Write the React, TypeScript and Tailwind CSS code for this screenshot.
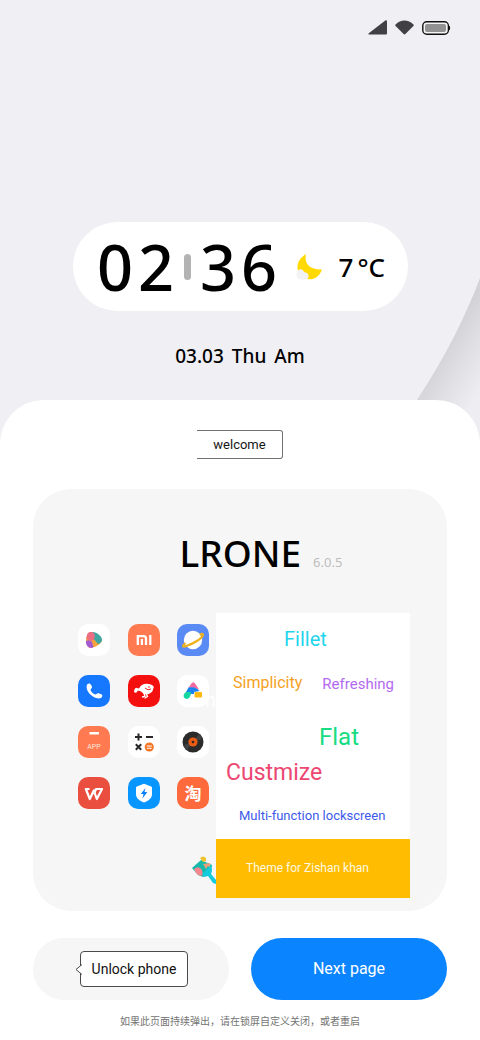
import type { ReactNode } from "react";

const rounded = "font-['Noto_Sans','Noto_Sans_CJK_SC',sans-serif]";

function StatusBar() {
  return (
    <div className="flex items-center justify-end gap-2 pr-[29px] pt-5" aria-label="Status">
      <svg width="19" height="15" viewBox="0 0 19 15" fill="#414145">
        <path d="M17.3.4Q19 0 19 1.5V13.5Q19 14.5 18 14.5H1Q-.3 14.2.8 13.2Z" />
      </svg>
      <svg width="19" height="15" viewBox="0 0 19 15" fill="#414145">
        <path d="M.6 4.4C5.500-.8 13.500-.8 18.400 4.400Q19.200 5.200 18.400 6L10.400 14.100Q9.500 15 8.600 14.100L.6 6Q-.2 5.200.6 4.400Z" />
      </svg>
      <svg width="29" height="14" viewBox="0 0 29 14">
        <rect x=".8" y=".8" width="25.600" height="12.400" rx="4" fill="#f5f5f7" stroke="#111" strokeWidth="1.400" />
        <rect x="3" y="3" width="21" height="8" rx="2" fill="#929292" />
        <path d="M27 5Q28.500 7 27 9Z" fill="#111" stroke="#111" />
      </svg>
    </div>
  );
}

function Backdrop() {
  return (
    <svg className="absolute right-0 top-[270px]" width="80" height="190" viewBox="0 0 80 190" aria-hidden="true">
      <defs>
        <linearGradient id="fold" gradientUnits="userSpaceOnUse" x1="45" y1="75" x2="91" y2="103">
          <stop offset="0" stopColor="#d2d2d7" />
          <stop offset=".45" stopColor="#dfdfe4" />
          <stop offset="1" stopColor="#ededf2" />
        </linearGradient>
      </defs>
      <path d="M80 8C66 46 43 91 17 130L-4 160V190H80Z" fill="url(#fold)" />
    </svg>
  );
}

function Digit({ children }: { children: ReactNode }) {
  return <span className="w-[41px] text-center">{children}</span>;
}

function Clock() {
  return (
    <section className="mx-auto mt-[187px] flex h-[89px] w-[335px] items-center rounded-full bg-white pl-[22px]" aria-label="Time and weather">
      <div className={`flex items-center text-[63px] font-medium leading-[88px] text-black ${rounded}`}>
        <Digit>0</Digit>
        <Digit>2</Digit>
        <span className="mx-[7px] h-[26px] w-[7px] rounded-full bg-[#b3b3b3]" />
        <Digit>3</Digit>
        <Digit>6</Digit>
      </div>
      <svg className="ml-4 shrink-0" width="27" height="28" viewBox="0 0 27 28">
        <path d="M10 1C8 9 12 17 26 16.500C23 25 15 28.500 8 25C0 21-2 8 10 1Z" fill="#ffd900" />
        <path d="M4 26.500C-.5 25.500-.6 17.500 3.500 16.500C6 15.500 7.500 17.500 8 19C11 19.500 13 21 12.500 24Q12 26.500 9.500 26.500Z" fill="#f2f2f2" />
      </svg>
      <div className={`ml-4 flex items-center gap-1 text-[26px] font-medium leading-8 text-black ${rounded}`}>
        <span>7</span>
        <span>°C</span>
      </div>
    </section>
  );
}

function Tile({ label, color, children }: { label: string; color: string; children: ReactNode }) {
  return (
    <li className={`h-8 w-8 overflow-hidden rounded-[10px] ${color}`}>
      <svg role="img" aria-label={label} width="32" height="32" viewBox="0 0 32 32">
        {children}
      </svg>
    </li>
  );
}

function IconGrid() {
  return (
    <ul className="grid grid-cols-[32px_32px_32px] justify-between gap-y-[19px]">
      <Tile label="Gallery" color="bg-white">
        <path d="M11 9C14 6.500 23 11 24 16C24 20 15 25 11 23.500C7 21 7 12 11 9Z" fill="#f5a43b" />
        <path d="M14 8C20 8 24 13 24 16Q23.500 19 20 20L14 13Z" fill="#40a6a4" />
        <path d="M8 17Q12 15 14 18L15.500 23Q14 24.500 11 23.500Q7.500 21 8 17Z" fill="#a45ad0" />
        <path d="M8.500 15C8.500 10 10 7.500 13.500 8C18 9 17.500 15 14 17Z" fill="#ee6c82" />
      </Tile>
      <Tile label="Mi" color="bg-[#ff7a50]">
        <path d="M9.800 21V12.200H15.500Q18 12.200 18 14.700V21M13.900 15V21M22.300 11V21" fill="none" stroke="#fff" strokeWidth="2.300" />
      </Tile>
      <Tile label="Browser" color="bg-[#5a8bf5]">
        <circle cx="16" cy="16" r="9.200" fill="#fff" />
        <path d="M8.500 19C4.500 22.500 5.800 23.500 10 21.800C17 19.300 25 14.500 26 11C26.200 9.300 24 10 22.800 10.800" fill="none" stroke="#efb11c" strokeWidth="2.200" />
      </Tile>
      <Tile label="Phone" color="bg-[#1677ff]">
        <path d="M9.500 9C11 7.800 12.500 8.500 13.200 10L14 12C14.300 13.300 12.300 14 12.500 15C13.500 17.500 15.500 19 17.500 19.500C18.500 19.500 19 18 20.500 18.300L23.300 19.300C25 20.300 24.500 22 23 23C16 25.500 5.500 15 9.500 9Z" fill="#fff" />
      </Tile>
      <Tile label="Shop" color="bg-[#f3100f]">
        <path d="M6 16Q7 12 9 13L11 13.500C13 9 18 7.500 24 10Q27 12 25 14C25 18 20 20 16 19L13 16.500L10 15.500L8.500 17.500Q6 18.500 6 16Z" fill="#fff" />
        <path d="M18 18L19.500 21.500L17 23M16 18.500L17 21L14.500 22" fill="none" stroke="#fff" strokeWidth="1.400" strokeLinecap="round" />
        <circle cx="21" cy="12" r=".8" fill="#f3100f" />
        <path d="M17 13Q20 16 23 14" fill="none" stroke="#f3100f" strokeWidth=".9" />
      </Tile>
      <Tile label="Themes" color="bg-white">
        <path d="M11.500 13L14 9Q16 5.500 18.500 9L22 14.500Q17 12 11.500 13Z" fill="#f06b9f" />
        <path d="M11.500 12.500Q19 11 22.500 16L17 17V19H13L8.500 18Z" fill="#1983f4" />
        <path d="M9 17Q15 16 14 19Q12.500 24 9.500 24Q5.500 23 7 19Z" fill="#13d6a0" />
        <rect x="17.500" y="17" width="7.500" height="5.500" rx="1" fill="#ffb90f" />
      </Tile>
      <Tile label="Apps" color="bg-[#ff7a50]">
        <rect x="11.500" y="6" width="9.500" height="2.500" rx=".6" fill="#fff" />
        <text x="16" y="23" textAnchor="middle" fill="#ffe8df" fontSize="7" className="font-['Roboto',sans-serif]">APP</text>
      </Tile>
      <Tile label="Calculator" color="bg-white">
        <path d="M7 11H14M10.500 7.500V14.500M18 11H25M7.800 18.300L13.200 23.700M13.200 18.300L7.800 23.700" stroke="#272727" strokeWidth="2" fill="none" />
        <circle cx="21.300" cy="21" r="4.600" fill="#f47728" />
        <path d="M18.800 20H23.800M18.800 22.300H23.800" stroke="#fff" strokeWidth="1.100" />
      </Tile>
      <Tile label="Music" color="bg-white">
        <circle cx="16" cy="16" r="10.500" fill="#2b2b2b" />
        <path d="M16 16L7 19A10.500 10.500 0 0 0 10 24ZM16 16L25 13A10.500 10.500 0 0 0 22 8Z" fill="#414141" />
        <circle cx="16" cy="16" r="4.600" fill="#ea5b13" />
        <circle cx="16" cy="16" r="1.300" fill="#30241f" />
      </Tile>
      <Tile label="Office" color="bg-[#e94e3f]">
        <path d="M11.500 12H7.800L11.800 22L15.800 13.500L18.800 22L24 12H18L16.800 15" fill="none" stroke="#fff" strokeWidth="2.200" strokeLinejoin="round" />
      </Tile>
      <Tile label="Security" color="bg-[#0795ff]">
        <path d="M16 6.800L23.200 9.500Q24 9.900 24 11V17C24 21 21 23.500 16 25.500C11 23.500 8 21 8 17V11Q8 9.900 8.800 9.500Z" fill="#fff" />
        <path d="M17.500 11L12.800 17H15.500L14.500 21.500L19.300 15H16.500Z" fill="#087fff" />
      </Tile>
      <Tile label="Taobao" color="bg-[#ff6a3d]">
        <text x="16" y="22.500" textAnchor="middle" fill="#fff" fontSize="17" className="font-['Noto_Sans_CJK_SC',sans-serif] font-bold">淘</text>
      </Tile>
    </ul>
  );
}

function Brush() {
  return (
    <svg className="mt-[47px] self-end" width="24" height="29" viewBox="0 0 24 29" aria-hidden="true">
      <path d="M0 12L9 4L20 9L19 16L11 21L6 19Z" fill="#16b9aa" />
      <path d="M2 13Q7 9 10 14L11 19Q7 21 4 17Z" fill="#f4868d" />
      <path d="M8 2Q11-1 14 2V5L11 6Z" fill="#efc22f" />
      <path d="M11 8L18 7L19 13L16 10L14 13Z" fill="#e8a17b" />
      <path d="M10 18L19 9L20 15L19 18L24 24V28L21 27L16 20L12 21Z" fill="#14cbdc" />
    </svg>
  );
}

function Words() {
  return (
    <div className="flex min-w-0 flex-1 flex-col bg-white font-['Roboto',sans-serif]">
      <p className="pl-[68px] pt-3 text-xl leading-7 text-[#1fd5ed]">Fillet</p>
      <div className="mt-4 flex justify-between pl-[17px] pr-4">
        <p className="text-base leading-7 text-[#f5a11f]">Simplicity</p>
        <p className="pt-px text-[15px] leading-7 text-[#b36af0]">Refreshing</p>
      </div>
      <p className="mt-[23px] pl-[103px] text-2xl leading-8 text-[#18dc82]">Flat</p>
      <p className="mt-1 pl-[10px] text-[23px] leading-8 text-[#ec4771]">Custmize</p>
      <p className="mt-[15px] pl-[23px] text-[13px] leading-6 text-[#405bea]">Multi-function lockscreen</p>
      <p className="mt-auto bg-[#ffbc00] py-[18px] pl-[30px] text-xs leading-[23px] text-[#fff8e0]">Theme for Zishan khan</p>
    </div>
  );
}

export default function App() {
  return (
    <div className="relative flex min-h-screen flex-col overflow-hidden bg-[#efeff4]">
      <Backdrop />
      <header className="relative">
        <StatusBar />
        <Clock />
        <p className={`mt-8 flex justify-center gap-2 text-[19px] font-medium leading-[26px] text-black ${rounded}`}>
          <span>03.03</span>
          <span>Thu</span>
          <span>Am</span>
        </p>
      </header>
      <main className="relative mt-[31px] flex flex-1 flex-col rounded-t-[44px] bg-white px-[33px] pt-[30px]">
        <p className="mx-auto h-[29px] w-[86px] rounded-r-[3px] border border-l-0 border-[#707070] text-center font-['Roboto',sans-serif] text-[13px] leading-[27px] text-[#151515]">
          welcome
        </p>
        <section className="mt-[30px] h-[422px] rounded-[38px] bg-[#f6f6f6] pt-10">
          <div className={`flex items-baseline justify-center gap-3 pl-[42px] ${rounded}`}>
            <h1 className="text-[37px] font-medium leading-[48px] text-black">LRONE</h1>
            <span className="text-[13px] text-[#bdbdbd]">6.0.5</span>
          </div>
          <div className="mt-9 flex h-[285px] pl-[45px] pr-[37px]">
            <div className="relative flex w-[138px] shrink-0 flex-col pt-[11px]">
              <div className="w-[131px]">
                <IconGrid />
              </div>
              <span className="absolute right-0 top-[73px] font-['Roboto',sans-serif] text-xl text-white" aria-hidden="true">n</span>
              <Brush />
            </div>
            <Words />
          </div>
        </section>
        <div className="mt-[27px] grid grid-cols-2 gap-[22px] font-['Roboto',sans-serif]">
          <button type="button" className="flex h-[62px] items-center justify-center rounded-full bg-[#f6f6f6] pl-[6px]">
            <span className="relative rounded border border-[#4a4a4a] bg-white px-[11px] text-sm leading-[34px] text-[#111]">
              <svg className="absolute -left-[6px] top-3" width="7" height="11" viewBox="0 0 7 11" aria-hidden="true">
                <path d="M7 .5L1 5.500L7 10.500" fill="#fff" stroke="#4a4a4a" />
              </svg>
              Unlock phone
            </span>
          </button>
          <button type="button" className="h-[62px] rounded-full bg-[#0b84ff] text-base text-white">Next page</button>
        </div>
        <p className="mt-3 pb-3 text-center font-['Noto_Sans_CJK_SC',sans-serif] text-[10px] leading-[18px] text-[#747474]">
          如果此页面持续弹出，请在锁屏自定义关闭，或者重启
        </p>
      </main>
    </div>
  );
}
